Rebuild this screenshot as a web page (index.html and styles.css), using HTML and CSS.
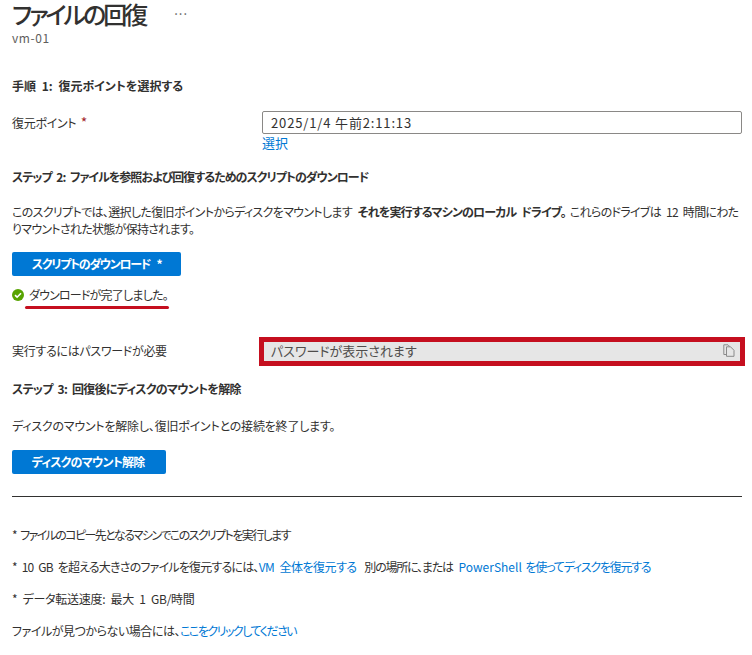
FILE: index.html
```html
<!DOCTYPE html>
<html lang="ja">
<head>
<meta charset="utf-8">
<title>ファイルの回復</title>
<link rel="stylesheet" href="styles.css">
</head>
<body>
<main class="page">
  <header class="head">
    <div class="title-row">
      <h1 class="title">ファイルの回復</h1>
      <span class="more">...</span>
    </div>
    <div class="sub">vm-01</div>
  </header>

  <h2 class="step step-1">手順 1: 復元ポイントを選択する</h2>

  <div class="field field-restore">
    <label class="field-label">復元ポイント <span class="req">*</span></label>
    <div class="field-control">
      <div class="input">2025/1/4 午前2:11:13</div>
      <a class="link select-link" href="#">選択</a>
    </div>
  </div>

  <h2 class="step step-2">ステップ 2: ファイルを参照および回復するためのスクリプトのダウンロード</h2>

  <p class="para para-2"><span class="intro">このスクリプトでは、選択した復旧ポイントからディスクをマウントします</span> <b class="strong">それを実行するマシンのローカル ドライブ。</b><span class="tail">これらのドライブは 12 時間にわたりマウントされた状態が保持されます。</span></p>

  <button class="btn btn-download">スクリプトのダウンロード *</button>

  <div class="status">
    <svg class="check" viewBox="0 0 12 12" width="12" height="12" aria-hidden="true">
      <circle cx="6" cy="6" r="6" fill="#57a300"/>
      <path d="M3 6.2 5.1 8.2 9 4.2" fill="none" stroke="#fff" stroke-width="1.6"/>
    </svg>
    <span class="status-text">ダウンロードが完了しました。</span>
    <span class="underline"></span>
  </div>

  <div class="field field-pass">
    <label class="field-label pass-label">実行するにはパスワードが必要</label>
    <div class="pass-box">
      <span>パスワードが表示されます</span>
      <svg class="copy" viewBox="0 0 12 13" width="12" height="13" aria-hidden="true">
        <path d="M3.5 10.5H.8V.8H5L7 2.8" fill="none" stroke="#8a8a8a"/>
        <path d="M3.5 2.8H7.5L11 6.3V12.3H3.5Z" fill="#e6e6e6" stroke="#8a8a8a"/>
      </svg>
    </div>
  </div>

  <h2 class="step step-3">ステップ 3: 回復後にディスクのマウントを解除</h2>

  <p class="para para-3">ディスクのマウントを解除し、復旧ポイントとの接続を終了します。</p>

  <button class="btn btn-unmount">ディスクのマウント解除</button>

  <hr class="rule">

  <p class="note note-first n1">* ファイルのコピー先となるマシンでこのスクリプトを実行します</p>
  <p class="note"><span class="n2a">* 10 GB を超える大きさのファイルを復元するには、</span><a class="link n2b" href="#">VM 全体を復元する</a> <span class="n2m">別の場所に、または</span> <a class="link n2l" href="#">PowerShell <span class="n2c">を使ってディスクを復元する</span></a></p>
  <p class="note n3">* データ転送速度: 最大 1 GB/時間</p>
  <p class="note"><span class="n4a">ファイルが見つからない場合には、</span><a class="link n4b" href="#">ここをクリックしてください</a></p>
</main>
</body>
</html>
```

FILE: styles.css
```css
* { box-sizing: border-box; }
html, body { margin: 0; padding: 0; background: #fff; }
body {
  font-family: "Noto Sans CJK JP", "Noto Sans", sans-serif;
  font-size: 12px;
  line-height: 16px;
  color: #323130;
  font-feature-settings: "palt";
  word-spacing: 3px;
  overflow: hidden;
}
.page { width: 752px; height: 655px; padding: 0 10px 0 12px; }
.head { height: 47px; }
.title-row { display: flex; align-items: flex-start; height: 30px; }
.title { margin: 0; font-size: 24px; line-height: 27px; font-weight: 500; letter-spacing: -3px; color: #323130; }
.more { margin: 0 0 0 29px; font-size: 13px; line-height: 20px; letter-spacing: 1px; color: #605e5c; }
.sub { line-height: 16px; letter-spacing: .6px; color: #605e5c; }
.step { margin: 0; font-size: 12px; line-height: 16px; font-weight: 700; color: #323130; }
.step-1 { margin-top: 31px; }
.field { display: flex; }
.field-label { width: 250px; flex: none; }
.req { color: #a4262c; font-size: 14px; }
.field-restore { margin-top: 20px; }
.field-restore .field-label { letter-spacing: -.3px; word-spacing: 2px; }
.field-control { flex: 1; margin-top: -3px; }
.input {
  height: 23px;
  border: 1px solid #8a8886;
  border-radius: 2px;
  padding: 2px 8px;
  font-size: 13px;
  line-height: 17px;
  letter-spacing: .85px;
  word-spacing: 0;
}
.select-link { display: block; line-height: 18px; font-size: 13px; }
.link { color: #0078d4; text-decoration: none; }
.step-2 { margin-top: 17px; letter-spacing: -1px; }
.para { margin: 0; line-height: 17px; }
.para-2 { margin-top: 18px; }
.intro { letter-spacing: -.65px; }
.strong { letter-spacing: -.85px; }
.tail { margin-left: 4px; letter-spacing: -.7px; }
.btn {
  display: flex;
  align-items: center;
  justify-content: center;
  height: 24px;
  border: 0;
  border-radius: 2px;
  background: #0078d4;
  color: #fff;
  font: inherit;
  font-weight: 700;
  padding: 0;
}
.btn-download { width: 169px; margin-top: 15px; letter-spacing: -1.3px; word-spacing: 5px; }
.btn-unmount { width: 154px; margin-top: 16px; letter-spacing: -.8px; padding-right: 2px; }
.status { position: relative; display: flex; align-items: center; gap: 5px; height: 16px; margin-top: 11px; color: #323130; }
.status-text { letter-spacing: -.8px; }
.underline { position: absolute; left: 13px; top: 19px; width: 144px; height: 3px; border-radius: 2px; background: #c50f1f; }
.field-pass { margin-top: 34px; align-items: center; }
.pass-label { width: 247px; letter-spacing: -.3px; padding-bottom: 2px; }
.pass-box {
  flex: none;
  width: 486px;
  height: 29px;
  margin-right: -3px;
  border: 5px solid #c50f1f;
  background: #e6e6e6;
  display: flex;
  align-items: center;
  justify-content: space-between;
  padding: 0 5px 2px 7px;
  font-size: 13px;
  color: #4f4d4b;
}
.copy { flex: none; }
.step-3 { margin-top: 15px; letter-spacing: -.75px; }
.para-3 { margin-top: 20px; letter-spacing: -.2px; }
.rule { margin: 22px 0 0; border: 0; border-top: 1px solid #323130; height: 0; width: 730px; }
.note { margin: 0 0 16px; line-height: 16px; }
.note-first { margin-top: 30px; }
.n1 { letter-spacing: -1.6px; }
.n2a { letter-spacing: -.8px; }
.n2b { letter-spacing: -.5px; }
.n2m { margin-left: 2px; letter-spacing: -1.2px; }
.n2l { word-spacing: 1px; }
.n2c { letter-spacing: -1.25px; }
.n3 { letter-spacing: -.3px; }
.n4a { letter-spacing: -.45px; }
.n4b { letter-spacing: -1.5px; }
```
